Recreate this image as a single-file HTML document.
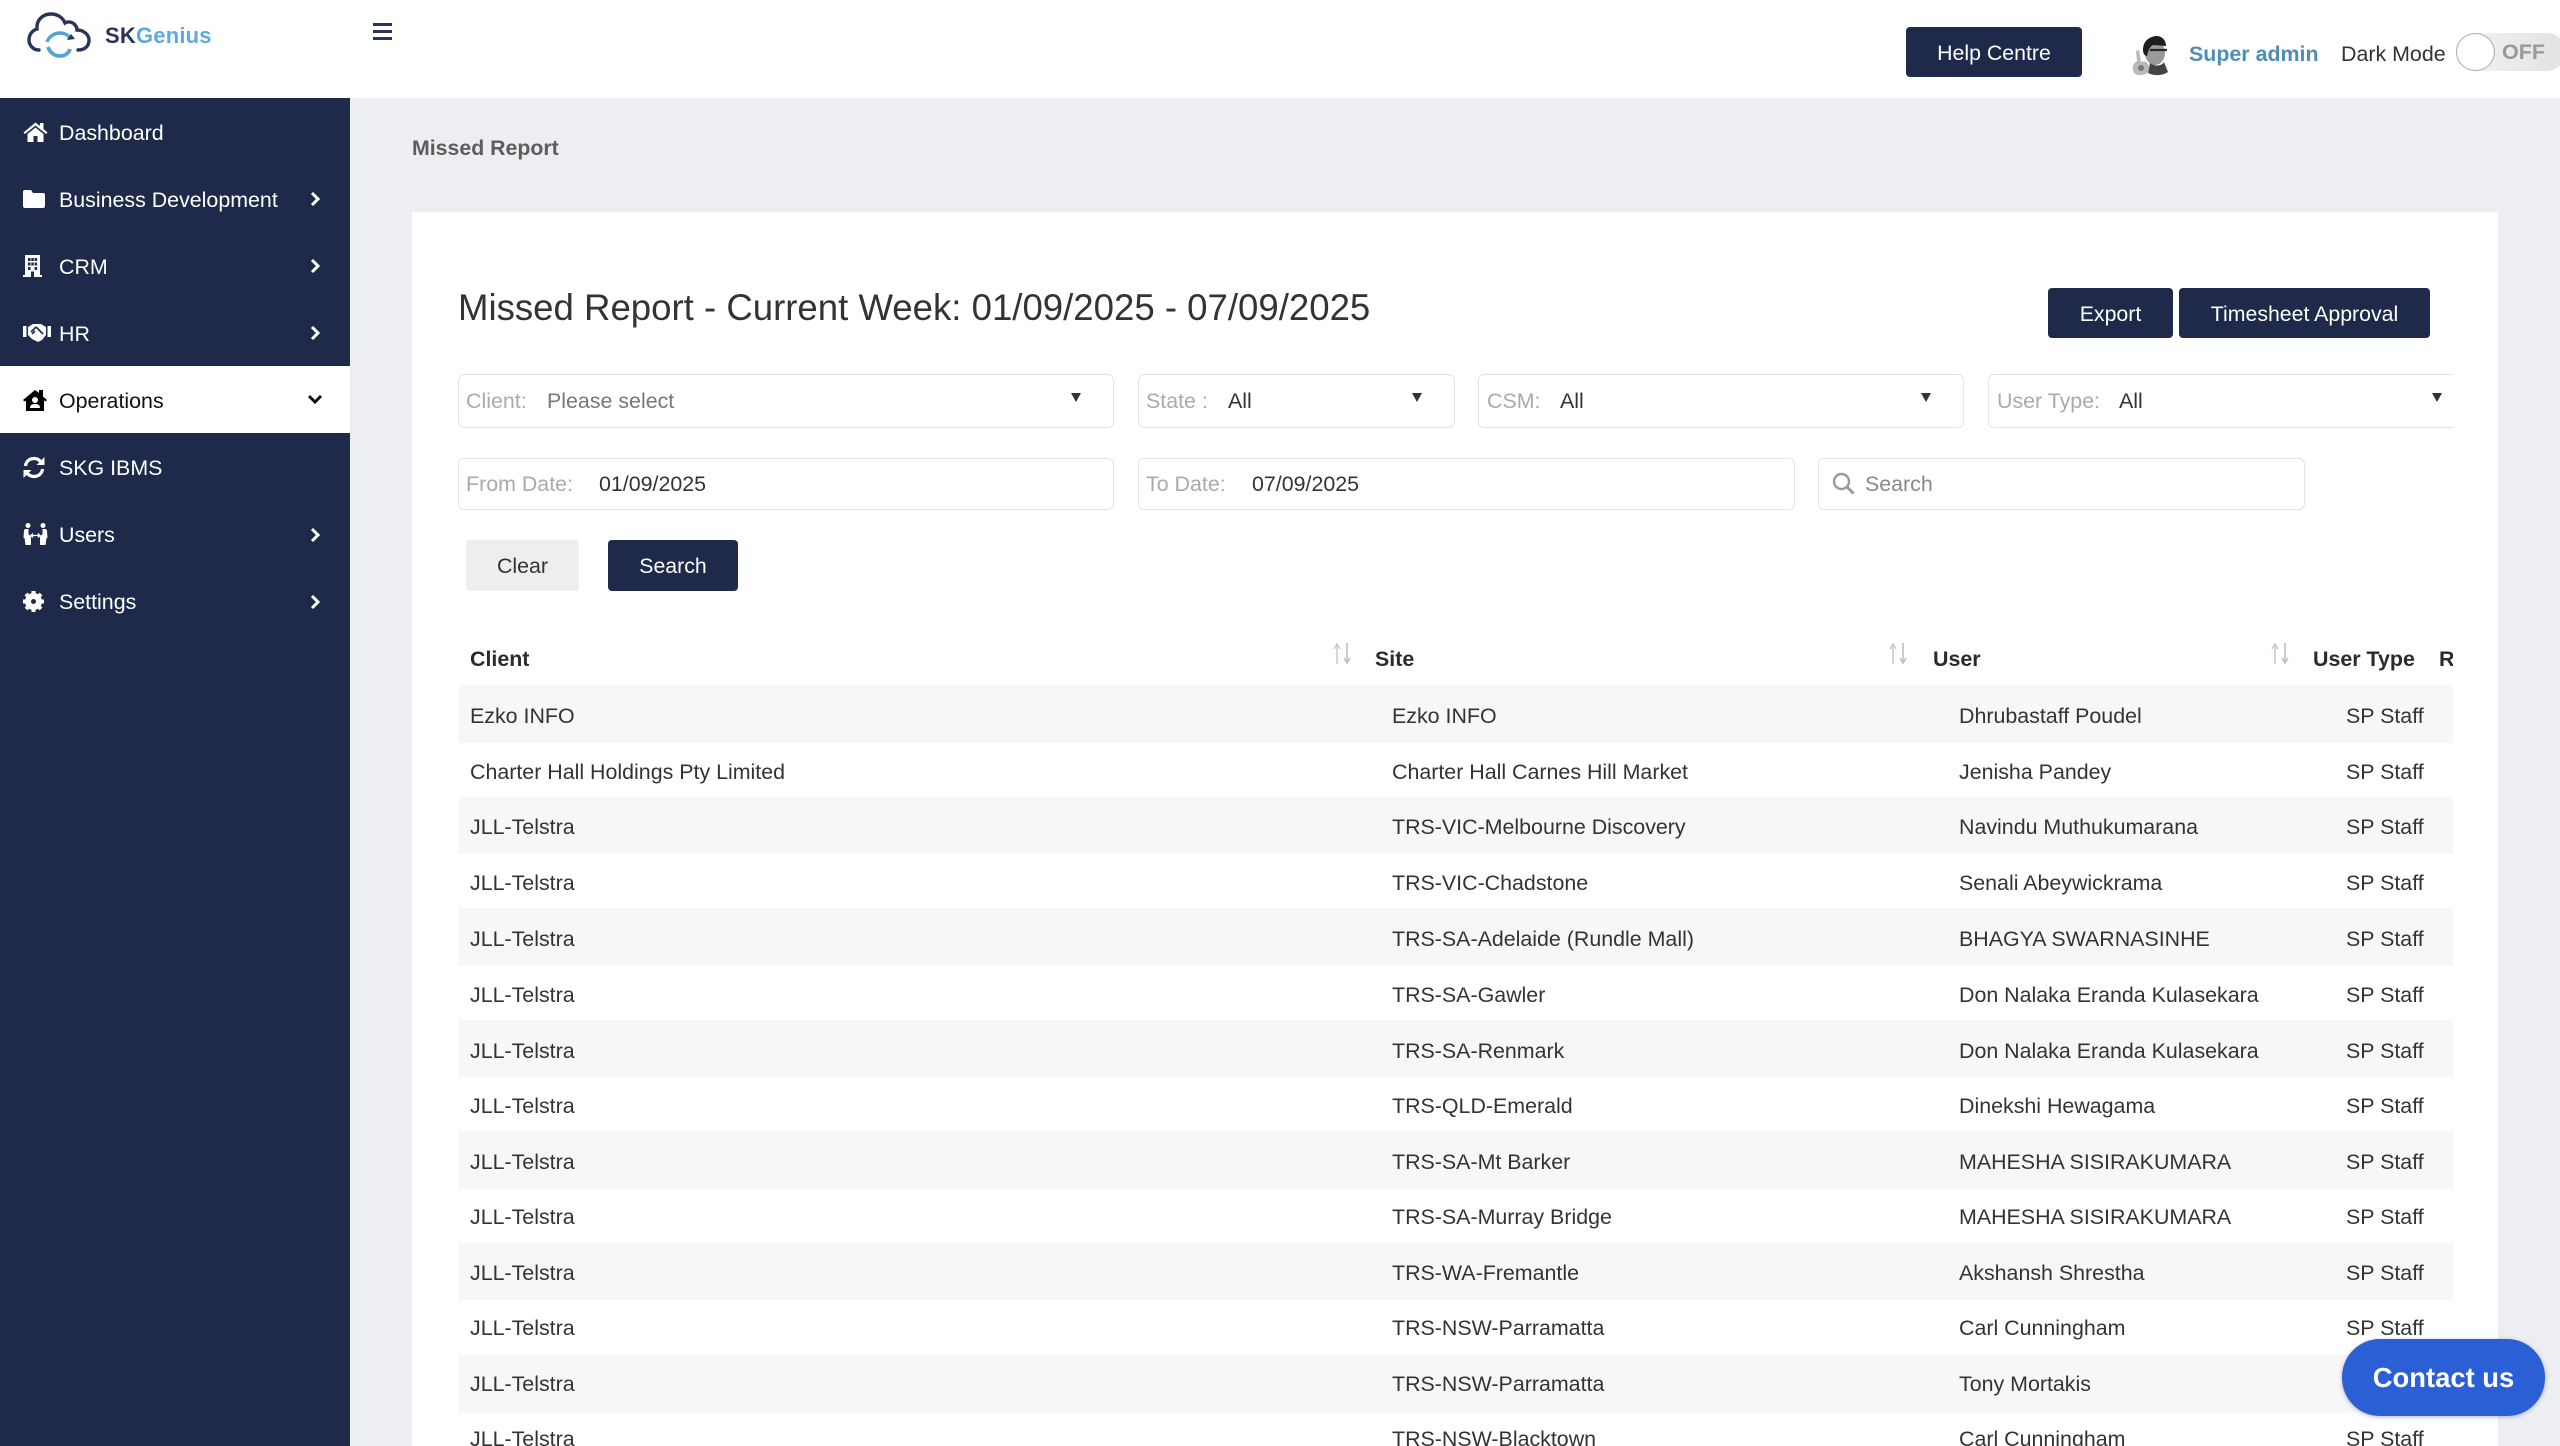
<!DOCTYPE html>
<html><head><meta charset="utf-8"><title>Missed Report</title>
<style>
*{box-sizing:border-box}
html,body{margin:0;padding:0;width:2560px;height:1446px;overflow:hidden;background:#eceef2;font-family:"Liberation Sans",Arial,sans-serif;color:#333}
.a{position:absolute;white-space:nowrap}
.t{position:absolute;white-space:nowrap;line-height:30px;font-size:21.4px;margin-top:1px}
.btn{position:absolute;background:#1f2a4b;color:#fff;border-radius:4px;font-size:21.3px;text-align:center;padding-top:1px}
.box{position:absolute;background:#fff;border:1.5px solid #e3e3e5;border-radius:6px}
.l{color:#aaa}
.nav{position:absolute;left:59px;color:#fff;font-size:21.4px;line-height:30px;white-space:nowrap;margin-top:1px}
.ic{position:absolute}
.arr{position:absolute;width:0;height:0;border-left:5px solid transparent;border-right:5px solid transparent;border-top:9px solid #333}
.r{position:absolute;left:0;width:1995px;background:#f7f7f8}
.c{position:absolute;white-space:nowrap;font-size:21.4px;line-height:30px;color:#333;margin-top:1px}
.h{position:absolute;white-space:nowrap;font-size:21.4px;line-height:30px;font-weight:bold;color:#2b2b2b;margin-top:1px}
</style></head><body>

<!-- header -->
<div class="a" style="left:0;top:0;width:2560px;height:98px;background:#fff"></div>
<svg class="ic" style="left:0;top:0" width="100" height="64" viewBox="0 0 100 64" fill="none">
<path d="M39 50C32 50 29 44 29 40C29 34 33 30 37 29C36 20 43 14 51 14C58 14 63 18 65 23C68 21 73 22 75 25C77 27 77 29 77 30C84 30 89 35 89 40C89 46 85 50 78 50" stroke="#28345a" stroke-width="3.400" stroke-linecap="round"/>
<path d="M47 42C49 36 55 33 60 33C65 33 68 35 70 38" stroke="#52a4d8" stroke-width="3.400"/>
<path d="M48 47C50 53 55 56 60 56C65 56 69 53 70 49" stroke="#52a4d8" stroke-width="3.800"/>
<path d="M67 40L75 39L71 34Z" fill="#28345a"/>
</svg>
<div class="a" style="left:105px;top:21px;font-size:22px;line-height:30px;font-weight:bold;letter-spacing:.2px;color:#28345a">SK<span style="color:#5cabdd">Genius</span></div>
<svg class="ic" style="left:373px;top:23px" width="20" height="18"><path d="M0 1.500H19M0 8.500H19M0 15.500H19" stroke="#28345a" stroke-width="3"/></svg>

<div class="btn" style="left:1906px;top:27px;width:176px;height:50px;line-height:50px">Help Centre</div>
<svg class="ic" style="left:2120px;top:25px" width="60" height="60" viewBox="0 0 60 60">
<ellipse cx="35" cy="28" rx="10" ry="12" fill="#9a9a9a"/>
<path d="M30 38C35 42 42 41 44 37L48 47C42 51 34 51 28 48Z" fill="#444"/>
<path d="M23 25C23 17 28 12 36 11C42 11 46 15 46 21L33 20C29 22 28 27 27 31C25 31 23 29 23 25Z" fill="#1f1f1f"/>
<path d="M30 25H47" stroke="#2a2a2a" stroke-width="2.200"/>
<path d="M16 26L19 25L21 37C25 35 29 38 29 43C29 48 24 51 19 50C14 50 12 46 13 41C14 38 16 37 17 36Z" fill="#b9b9b9"/>
<circle cx="21" cy="43" r="3" fill="#777"/>
</svg>
<div class="t" style="left:2189px;top:38px;font-weight:bold;color:#4f8db9">Super admin</div>
<div class="t" style="left:2341px;top:38px;color:#333">Dark Mode</div>
<div class="a" style="left:2456px;top:33px;width:110px;height:38px;border-radius:19px;background:linear-gradient(90deg,#f4f4f4,#e2e2e2)"></div>
<div class="a" style="left:2456px;top:33px;width:39px;height:38px;border-radius:50%;background:#fff;border:1.5px solid #aaa"></div>
<div class="t" style="left:2502px;top:36px;font-size:21.5px;font-weight:bold;color:#999">OFF</div>

<!-- sidebar -->
<div class="a" style="left:0;top:98px;width:350px;height:1348px;background:#1f2a4b"></div>
<div class="a" style="left:0;top:366px;width:350px;height:67px;background:#fff"></div>

<svg class="ic" style="left:23px;top:121px" width="25" height="22" viewBox="0 0 25 22" fill="#fff"><path d="M0.500 11.500L12.500 1.500L17 5V2H20.500V8L24.500 11.500L23 13L12.500 4.500L2 13Z"/><path d="M4.500 13L12.500 6.500L20.500 13V21H14.500V15H10.500V21H4.500Z"/></svg>
<div class="nav" style="top:117px">Dashboard</div>

<svg class="ic" style="left:23px;top:190px" width="22" height="18" viewBox="0 0 22 18" fill="#fff"><path d="M0 2Q0 0 2 0H8L10 3H20Q22 3 22 5V16Q22 18 20 18H2Q0 18 0 16Z"/></svg>
<div class="nav" style="top:184px">Business Development</div>

<svg class="ic" style="left:23px;top:255px" width="19" height="22" viewBox="0 0 19 22"><path d="M2 0H17V20H19V22H0V20H2Z" fill="#fff"/><path d="M5 3h2.500v3H5zM8.300 3h2.500v3H8.300zM11.600 3h2.500v3h-2.500zM5 7.500h2.500v3H5zM8.300 7.500h2.500v3H8.300zM11.600 7.500h2.500v3h-2.500zM5 12h2.500v3H5zM11.600 12h2.500v3h-2.500zM8 16.500h3V22H8z" fill="#1f2a4b"/></svg>
<div class="nav" style="top:251px">CRM</div>

<svg class="ic" style="left:23px;top:323px" width="28" height="19" viewBox="0 0 28 19"><path d="M0 3H3.500V14H0ZM24.500 3H28V14H24.500Z" fill="#fff"/><path d="M5 4L10 1H14L18 1L23 4V12L19 17L15 19L9 16L5 12Z" fill="#fff"/><path d="M8 9L13 4M13 4L20 11M12 8L9 11" stroke="#1f2a4b" stroke-width="1.600" fill="none"/></svg>
<div class="nav" style="top:318px">HR</div>

<svg class="ic" style="left:23px;top:389px" width="24" height="22" viewBox="0 0 24 22"><path d="M0 11L12 1L16 4V1H20V7.500L24 11L22.500 12.500L21 11.500V22H3V11.500L1.500 12.500Z" fill="#000"/><circle cx="12" cy="11" r="3" fill="#fff"/><path d="M7 19C7 16 9 15 12 15C15 15 17 16 17 19Z" fill="#fff"/></svg>
<div class="nav" style="top:385px;color:#111">Operations</div>

<svg class="ic" style="left:23px;top:456px" width="22" height="23" viewBox="0 0 22 23" fill="none"><path d="M2.500 10C3 5 7 2.500 11 2.500C14 2.500 16.500 4 18 6" stroke="#fff" stroke-width="3.200"/><path d="M21.500 1V9H13.500Z" fill="#fff"/><path d="M19.500 13C19 18 15 20.500 11 20.500C8 20.500 5.500 19 4 17" stroke="#fff" stroke-width="3.200"/><path d="M0.500 22V14H8.500Z" fill="#fff"/></svg>
<div class="nav" style="top:452px">SKG IBMS</div>

<svg class="ic" style="left:23px;top:523px" width="25" height="22" viewBox="0 0 25 22" fill="#fff"><circle cx="5" cy="2.500" r="2.500"/><circle cx="20" cy="2.500" r="2.500"/><path d="M1 8Q1 6 3 6H5.500V11L8 13.500V22H2.500L1.500 15H0.500Z"/><path d="M24 8Q24 6 22 6H19.500V11L17 13.500V22H22.500L23.500 15H24.500Z"/><path d="M8 12.500H17M10 10.500L8 12.500L10 14.500M15 10.500L17 12.500L15 14.500" stroke="#fff" stroke-width="1.300" fill="none"/></svg>
<div class="nav" style="top:519px">Users</div>

<svg class="ic" style="left:23px;top:591px" width="21" height="21" viewBox="0 0 21 21"><circle cx="10.500" cy="10.500" r="5.500" fill="none" stroke="#fff" stroke-width="6"/><g stroke="#fff" stroke-width="4"><path d="M10.500 0V4M10.500 17V21M0 10.500H4M17 10.500H21M3 3L6 6M15 15L18 18M18 3L15 6M3 18L6 15"/></g></svg>
<div class="nav" style="top:586px">Settings</div>

<svg class="ic" style="left:310px;top:191px" width="10" height="16"><path d="M2 2L8 8L2 14" fill="none" stroke="#fff" stroke-width="3"/></svg>
<svg class="ic" style="left:310px;top:258px" width="10" height="16"><path d="M2 2L8 8L2 14" fill="none" stroke="#fff" stroke-width="3"/></svg>
<svg class="ic" style="left:310px;top:325px" width="10" height="16"><path d="M2 2L8 8L2 14" fill="none" stroke="#fff" stroke-width="3"/></svg>
<svg class="ic" style="left:307px;top:394px" width="16" height="11"><path d="M2 2L8 8L14 2" fill="none" stroke="#111" stroke-width="3"/></svg>
<svg class="ic" style="left:310px;top:527px" width="10" height="16"><path d="M2 2L8 8L2 14" fill="none" stroke="#fff" stroke-width="3"/></svg>
<svg class="ic" style="left:310px;top:594px" width="10" height="16"><path d="M2 2L8 8L2 14" fill="none" stroke="#fff" stroke-width="3"/></svg>

<!-- content -->
<div class="t" style="left:412px;top:132px;font-weight:bold;color:#5d5d5d;font-size:21.3px">Missed Report</div>
<div class="a" style="left:412px;top:212px;width:2086px;height:1234px;background:#fff"></div>
<div class="a" style="left:458px;top:286px;font-size:36.6px;line-height:44px;color:#333">Missed Report - Current Week: 01/09/2025 - 07/09/2025</div>

<div class="btn" style="left:2048px;top:288px;width:125px;height:50px;line-height:50px">Export</div>
<div class="btn" style="left:2179px;top:288px;width:251px;height:50px;line-height:50px">Timesheet Approval</div>

<!-- filters -->
<div class="box" style="left:458px;top:374px;width:656px;height:54px"></div>
<div class="t l" style="left:466px;top:385px">Client:</div><div class="t" style="left:547px;top:385px;color:#777">Please select</div><div class="arr" style="left:1071px;top:393px"></div>
<div class="box" style="left:1138px;top:374px;width:317px;height:54px"></div>
<div class="t l" style="left:1146px;top:385px">State :</div><div class="t" style="left:1228px;top:385px">All</div><div class="arr" style="left:1412px;top:393px"></div>
<div class="box" style="left:1478px;top:374px;width:486px;height:54px"></div>
<div class="t l" style="left:1487px;top:385px">CSM:</div><div class="t" style="left:1560px;top:385px">All</div><div class="arr" style="left:1921px;top:393px"></div>
<div class="a" style="left:1988px;top:374px;width:465px;height:54px;overflow:hidden"><div class="box" style="left:0;top:0;width:500px;height:54px"></div></div>
<div class="t l" style="left:1997px;top:385px">User Type:</div><div class="t" style="left:2119px;top:385px">All</div><div class="arr" style="left:2432px;top:393px"></div>

<div class="box" style="left:458px;top:458px;width:656px;height:52px"></div>
<div class="t l" style="left:466px;top:468px">From Date:</div><div class="t" style="left:599px;top:468px">01/09/2025</div>
<div class="box" style="left:1138px;top:458px;width:657px;height:52px"></div>
<div class="t l" style="left:1146px;top:468px">To Date:</div><div class="t" style="left:1252px;top:468px">07/09/2025</div>
<div class="box" style="left:1818px;top:458px;width:487px;height:52px"></div>
<svg class="ic" style="left:1832px;top:472px" width="23" height="23" viewBox="0 0 23 23" fill="none"><circle cx="9.500" cy="9.500" r="7.500" stroke="#999" stroke-width="2.400"/><path d="M15 15L21.500 21.500" stroke="#999" stroke-width="3"/></svg>
<div class="t" style="left:1865px;top:468px;color:#888">Search</div>

<div class="a" style="left:466px;top:540px;width:113px;height:51px;line-height:51px;background:#eeeeee;border-radius:4px;text-align:center;font-size:21.4px;color:#333;padding-top:1px">Clear</div>
<div class="btn" style="left:608px;top:540px;width:130px;height:51px;line-height:51px">Search</div>

<!-- table -->
<div class="a" style="left:458px;top:630px;width:1995px;height:816px;overflow:hidden">
<div class="h" style="left:12px;top:13px">Client</div>
<div class="h" style="left:917px;top:13px">Site</div>
<div class="h" style="left:1475px;top:13px">User</div>
<div class="h" style="left:1855px;top:13px">User Type</div>
<div class="h" style="left:1981px;top:13px">R</div>
<svg class="ic" style="left:874px;top:13px" width="21" height="21"><path d="M5 21V2M2 6L5 1L8 6" fill="none" stroke="#c9c9c9" stroke-width="1.500"/><path d="M15 0V19M12 15L15 20L18 15" fill="none" stroke="#bbb" stroke-width="1.500"/></svg>
<svg class="ic" style="left:1430px;top:13px" width="21" height="21"><path d="M5 21V2M2 6L5 1L8 6" fill="none" stroke="#c9c9c9" stroke-width="1.500"/><path d="M15 0V19M12 15L15 20L18 15" fill="none" stroke="#bbb" stroke-width="1.500"/></svg>
<svg class="ic" style="left:1812px;top:13px" width="21" height="21"><path d="M5 21V2M2 6L5 1L8 6" fill="none" stroke="#c9c9c9" stroke-width="1.500"/><path d="M15 0V19M12 15L15 20L18 15" fill="none" stroke="#bbb" stroke-width="1.500"/></svg>

<div class="r" style="top:55px;height:58px"></div>
<div class="r" style="top:167px;height:57px"></div>
<div class="r" style="top:278px;height:58px"></div>
<div class="r" style="top:390px;height:57px"></div>
<div class="r" style="top:501px;height:58px"></div>
<div class="r" style="top:613px;height:57px"></div>
<div class="r" style="top:725px;height:58px"></div>

<div class="c" style="left:12px;top:70px">Ezko INFO</div><div class="c" style="left:934px;top:70px">Ezko INFO</div><div class="c" style="left:1501px;top:70px">Dhrubastaff Poudel</div><div class="c" style="left:1888px;top:70px">SP Staff</div>
<div class="c" style="left:12px;top:126px">Charter Hall Holdings Pty Limited</div><div class="c" style="left:934px;top:126px">Charter Hall Carnes Hill Market</div><div class="c" style="left:1501px;top:126px">Jenisha Pandey</div><div class="c" style="left:1888px;top:126px">SP Staff</div>
<div class="c" style="left:12px;top:181px">JLL-Telstra</div><div class="c" style="left:934px;top:181px">TRS-VIC-Melbourne Discovery</div><div class="c" style="left:1501px;top:181px">Navindu Muthukumarana</div><div class="c" style="left:1888px;top:181px">SP Staff</div>
<div class="c" style="left:12px;top:237px">JLL-Telstra</div><div class="c" style="left:934px;top:237px">TRS-VIC-Chadstone</div><div class="c" style="left:1501px;top:237px">Senali Abeywickrama</div><div class="c" style="left:1888px;top:237px">SP Staff</div>
<div class="c" style="left:12px;top:293px">JLL-Telstra</div><div class="c" style="left:934px;top:293px">TRS-SA-Adelaide (Rundle Mall)</div><div class="c" style="left:1501px;top:293px">BHAGYA SWARNASINHE</div><div class="c" style="left:1888px;top:293px">SP Staff</div>
<div class="c" style="left:12px;top:349px">JLL-Telstra</div><div class="c" style="left:934px;top:349px">TRS-SA-Gawler</div><div class="c" style="left:1501px;top:349px">Don Nalaka Eranda Kulasekara</div><div class="c" style="left:1888px;top:349px">SP Staff</div>
<div class="c" style="left:12px;top:405px">JLL-Telstra</div><div class="c" style="left:934px;top:405px">TRS-SA-Renmark</div><div class="c" style="left:1501px;top:405px">Don Nalaka Eranda Kulasekara</div><div class="c" style="left:1888px;top:405px">SP Staff</div>
<div class="c" style="left:12px;top:460px">JLL-Telstra</div><div class="c" style="left:934px;top:460px">TRS-QLD-Emerald</div><div class="c" style="left:1501px;top:460px">Dinekshi Hewagama</div><div class="c" style="left:1888px;top:460px">SP Staff</div>
<div class="c" style="left:12px;top:516px">JLL-Telstra</div><div class="c" style="left:934px;top:516px">TRS-SA-Mt Barker</div><div class="c" style="left:1501px;top:516px">MAHESHA SISIRAKUMARA</div><div class="c" style="left:1888px;top:516px">SP Staff</div>
<div class="c" style="left:12px;top:571px">JLL-Telstra</div><div class="c" style="left:934px;top:571px">TRS-SA-Murray Bridge</div><div class="c" style="left:1501px;top:571px">MAHESHA SISIRAKUMARA</div><div class="c" style="left:1888px;top:571px">SP Staff</div>
<div class="c" style="left:12px;top:627px">JLL-Telstra</div><div class="c" style="left:934px;top:627px">TRS-WA-Fremantle</div><div class="c" style="left:1501px;top:627px">Akshansh Shrestha</div><div class="c" style="left:1888px;top:627px">SP Staff</div>
<div class="c" style="left:12px;top:682px">JLL-Telstra</div><div class="c" style="left:934px;top:682px">TRS-NSW-Parramatta</div><div class="c" style="left:1501px;top:682px">Carl Cunningham</div><div class="c" style="left:1888px;top:682px">SP Staff</div>
<div class="c" style="left:12px;top:738px">JLL-Telstra</div><div class="c" style="left:934px;top:738px">TRS-NSW-Parramatta</div><div class="c" style="left:1501px;top:738px">Tony Mortakis</div><div class="c" style="left:1888px;top:738px">SP Staff</div>
<div class="c" style="left:12px;top:793px">JLL-Telstra</div><div class="c" style="left:934px;top:793px">TRS-NSW-Blacktown</div><div class="c" style="left:1501px;top:793px">Carl Cunningham</div><div class="c" style="left:1888px;top:793px">SP Staff</div>
</div>

<div class="a" style="left:2342px;top:1339px;width:203px;height:77px;border-radius:38px;background:#2a5fd6;color:#fff;font-weight:bold;font-size:27.4px;line-height:77px;text-align:center;box-shadow:0 1px 4px rgba(30,50,100,.35)">Contact us</div>
</body></html>
